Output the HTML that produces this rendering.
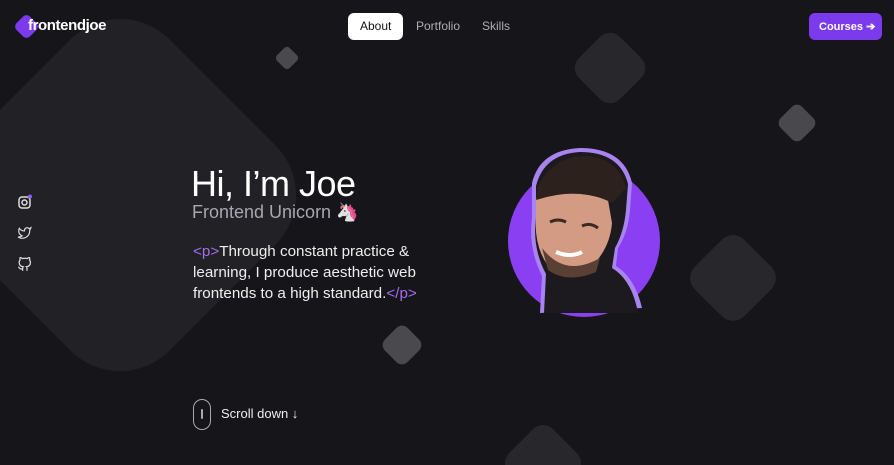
<!DOCTYPE html>
<html><head><meta charset="utf-8"><style>
*{margin:0;padding:0;box-sizing:border-box}
html,body{width:894px;height:465px;overflow:hidden}
body{background:#16151a;font-family:"Liberation Sans",sans-serif;color:#fff}
#w{position:relative;width:894px;height:465px;overflow:hidden}
.d{position:absolute;transform:rotate(45deg)}
.t{position:absolute;white-space:nowrap}
</style></head><body><div id="w">
<div class="d" style="left:-25px;top:50px;width:290px;height:290px;border-radius:70px;background:#222126"></div>
<div class="d" style="left:278px;top:49px;width:18px;height:18px;border-radius:4px;background:#4a494e"></div>
<div class="d" style="left:581px;top:39px;width:58px;height:58px;border-radius:14px;background:#28272c"></div>
<div class="d" style="left:782px;top:108px;width:30px;height:30px;border-radius:7px;background:#49484d"></div>
<div class="d" style="left:698px;top:243px;width:70px;height:70px;border-radius:16px;background:#28272c"></div>
<div class="d" style="left:386px;top:329px;width:32px;height:32px;border-radius:8px;background:#4a494e"></div>
<div class="d" style="left:512px;top:432px;width:62px;height:62px;border-radius:14px;background:#28272c"></div>

<div class="d" style="left:17px;top:17px;width:19px;height:19px;border-radius:5px;background:#7c3aed"></div>
<div class="t" style="left:28px;top:17px;font-size:15px;font-weight:bold;letter-spacing:-0.4px">frontendjoe</div>

<div style="position:absolute;left:348px;top:13px;width:55px;height:27px;border-radius:6px;background:#fff"></div>
<div class="t" style="left:360px;top:19px;font-size:12px;color:#111">About</div>
<div class="t" style="left:416px;top:19px;font-size:12px;color:#b0aeb5">Portfolio</div>
<div class="t" style="left:482px;top:19px;font-size:12px;color:#b0aeb5">Skills</div>
<div style="position:absolute;left:809px;top:13px;width:73px;height:27px;border-radius:6px;background:#7c3aed"></div>
<div class="t" style="left:819px;top:20px;font-size:11px;font-weight:bold">Courses ➔</div>

<svg style="position:absolute;left:17px;top:194px" width="16" height="16" viewBox="0 0 16 16" fill="none" stroke="#ddd" stroke-width="1.5"><rect x="2" y="3" width="11" height="11" rx="3"/><circle cx="7.5" cy="8.5" r="2.5"/><circle cx="13" cy="2.5" r="2" fill="#8b5cf6" stroke="none"/></svg>
<svg style="position:absolute;left:17px;top:226px" width="15" height="14" viewBox="0 0 24 24" fill="none" stroke="#ddd" stroke-width="2"><path d="M23 3a10.9 10.9 0 0 1-3.14 1.53 4.48 4.48 0 0 0-7.86 3v1A10.66 10.66 0 0 1 3 4s-4 9 5 13a11.64 11.64 0 0 1-7 2c9 5 20 0 20-11.5a4.5 4.5 0 0 0-.08-.83A7.72 7.72 0 0 0 23 3z"/></svg>
<svg style="position:absolute;left:17px;top:257px" width="15" height="15" viewBox="0 0 24 24" fill="none" stroke="#ddd" stroke-width="2"><path d="M9 19c-5 1.5-5-2.5-7-3m14 6v-3.87a3.37 3.37 0 0 0-.94-2.61c3.14-.35 6.44-1.54 6.44-7A5.44 5.44 0 0 0 20 4.77 5.07 5.07 0 0 0 19.91 1S18.73.65 16 2.48a13.38 13.38 0 0 0-7 0C6.270.65 5.09 1 5.09 1A5.07 5.07 0 0 0 5 4.77a5.44 5.44 0 0 0-1.5 3.78c0 5.42 3.3 6.61 6.44 7A3.37 3.37 0 0 0 9 18.13V22"/></svg>

<div class="t" style="left:191px;top:163px;font-size:36px;letter-spacing:-0.5px">Hi, I’m Joe</div>
<div class="t" style="left:192px;top:202px;font-size:18px;color:#a9a7ae">Frontend Unicorn 🦄</div>
<div class="t" style="left:193px;top:241px;font-size:15.2px;line-height:21px;color:#eee"><span style="color:#a66cf0">&lt;p&gt;</span>Through constant practice &amp;<br>learning, I produce aesthetic web<br>frontends to a high standard.<span style="color:#a66cf0">&lt;/p&gt;</span></div>

<div style="position:absolute;left:508px;top:165px;width:152px;height:152px;border-radius:50%;background:#8b3ff2"></div>
<svg style="position:absolute;left:520px;top:148px" width="130" height="165" viewBox="0 0 130 165">
<path d="M12 35 Q20 2 60 0 Q104 0 112 35 L110 62 Q108 85 98 100 L96 118 Q115 130 122 160 L20 165 L22 128 Q8 100 12 70 Z" fill="#a884f0"/>
<path d="M16 38 Q24 6 60 4 Q100 4 108 36 L106 62 Q104 84 95 100 L92 120 Q112 132 118 165 L24 165 L26 126 Q12 100 16 70 Z" fill="#1c1a1e"/>
<path d="M16 50 Q55 40 88 52 L92 75 Q90 100 72 118 Q48 130 28 118 Q14 98 16 70 Z" fill="#d39a84"/>
<path d="M22 100 Q45 130 80 110 L76 124 Q48 136 28 122 Z" fill="#5a4034"/>
<path d="M18 38 Q34 8 66 8 Q98 10 106 40 L92 55 Q60 38 16 52 Z" fill="#2c211d"/>
<path d="M30 74 Q38 70 46 74 M62 78 Q70 74 78 80" stroke="#3a2a24" stroke-width="3" fill="none"/>
<path d="M36 104 Q50 110 62 104" stroke="#fff" stroke-width="4" fill="none"/>
</svg>

<div style="position:absolute;left:193px;top:399px;width:18px;height:31px;border:1.5px solid #aaa;border-radius:9px"></div>
<div style="position:absolute;left:201px;top:409px;width:2px;height:10px;background:#aaa;border-radius:1px"></div>
<div class="t" style="left:221px;top:406px;font-size:13px;color:#eee">Scroll down ↓</div>
</div></body></html>
